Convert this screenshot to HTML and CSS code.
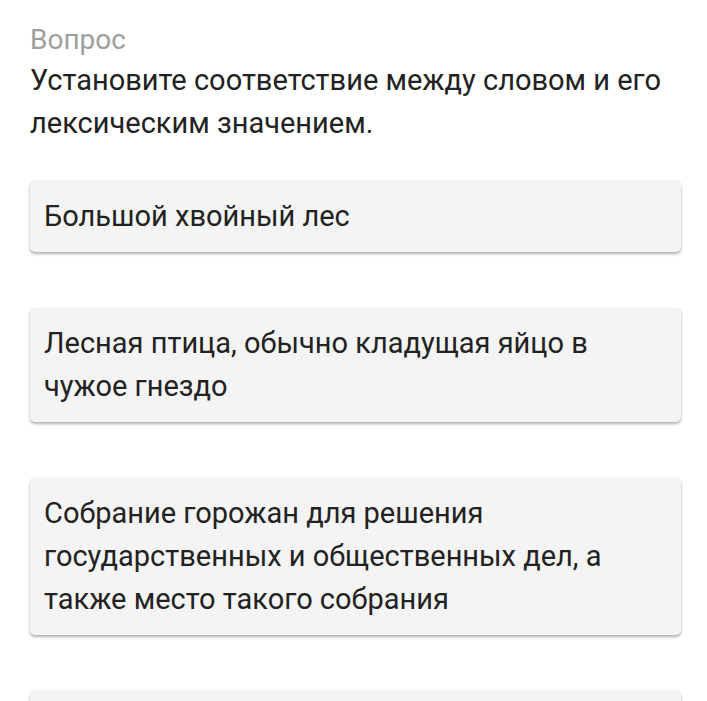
FILE: index.html
```html
<!DOCTYPE html>
<html lang="ru">
<head>
<meta charset="utf-8">
<link rel="stylesheet" href="styles.css">
</head>
<body>
<main class="page">
  <div class="label">Вопрос</div>
  <p class="question">Установите соответствие между словом и его лексическим значением.</p>
  <ul class="cards">
    <li class="card">Большой хвойный лес</li>
    <li class="card">Лесная птица, обычно кладущая яйцо в чужое гнездо</li>
    <li class="card">Собрание горожан для решения государственных и общественных дел, а также место такого собрания</li>
    <li class="card card-empty"></li>
  </ul>
</main>
</body>
</html>
```
FILE: styles.css
```css
html, body {
  margin: 0;
  padding: 0;
  background: #ffffff;
}
body {
  font-family: Roboto, "Noto Sans", sans-serif;
  color: #222222;
  overflow: hidden;
  height: 701px;
}
.page {
  padding: 21px 26px 0 30px;
}
.label {
  font-size: 28px;
  line-height: 38px;
  color: #9e9e9e;
}
.question {
  margin: 0;
  font-size: 29px;
  line-height: 43px;
}
.cards {
  list-style: none;
  margin: 36px 0 0;
  padding: 0;
  display: flex;
  flex-direction: column;
  gap: 56px;
}
.card {
  background: #f4f4f4;
  border-radius: 5px;
  padding: 14px 14px;
  font-size: 29px;
  line-height: 43px;
  box-shadow: 0 2px 3px rgba(0,0,0,0.3), 0 0 2px rgba(0,0,0,0.08);
}
.card-empty {
  min-height: 43px;
}
```
